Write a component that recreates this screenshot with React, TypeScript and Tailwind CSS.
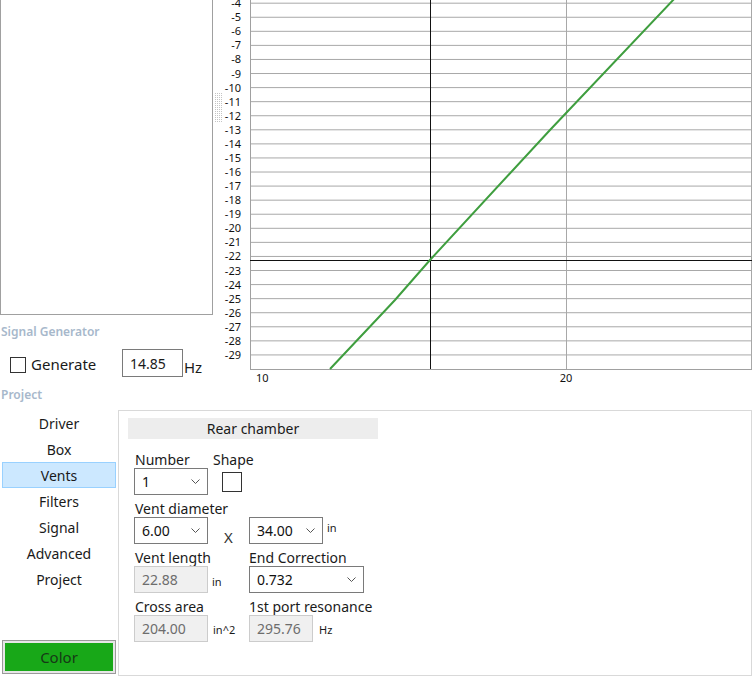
import React from "react";

const ROW = 14.07;
const PLOT_LEFT = 37;
const PLOT_BOTTOM = 369;
const CHART_W = 539;

const yFor = (v: number) => PLOT_BOTTOM - (v + 30) * ROW;
const levels = Array.from({ length: 27 }, (_, i) => -3 - i);

function Chart() {
    return (
        <svg width={CHART_W} height={384} className="block font-['Noto_Sans',sans-serif] text-[11px]">
            {/* splitter grip */}
            {Array.from({ length: 15 }, (_, r) =>
                [2, 4, 6, 8].map((c) => (
                    <rect key={`${r}-${c}`} x={c} y={93 + r * 2} width={1} height={1} fill="#c4c4c4" />
                ))
            )}

            {levels.map((v) => (
                <line key={v} x1={PLOT_LEFT} x2={CHART_W} y1={yFor(v)} y2={yFor(v)} stroke="#a8a8a8" strokeWidth={1} />
            ))}
            {levels.slice(1).map((v) => (
                <text key={v} x={28} y={yFor(v) + 4} textAnchor="end" fill="#111">
                    {v}
                </text>
            ))}

            <line x1={PLOT_LEFT + 0.5} x2={PLOT_LEFT + 0.5} y1={0} y2={PLOT_BOTTOM} stroke="#a0a0a0" />
            <line x1={353.5} x2={353.5} y1={0} y2={PLOT_BOTTOM} stroke="#a8a8a8" />
            <line x1={538.5} x2={538.5} y1={0} y2={PLOT_BOTTOM} stroke="#a8a8a8" />
            <line x1={PLOT_LEFT} x2={CHART_W} y1={PLOT_BOTTOM + 0.5} y2={PLOT_BOTTOM + 0.5} stroke="#a0a0a0" />

            {/* cursor */}
            <line x1={217.5} x2={217.5} y1={0} y2={PLOT_BOTTOM} stroke="#111" />
            <line x1={PLOT_LEFT} x2={CHART_W} y1={260.5} y2={260.5} stroke="#111" />

            <polyline
                points="117,369 182,300 217,260 337,130 463,-3"
                fill="none"
                stroke="#3f9e3f"
                strokeWidth={2}
            />

            <text x={43} y={382} fill="#111">10</text>
            <text x={353} y={382} textAnchor="middle" fill="#111">20</text>
        </svg>
    );
}

function Chevron() {
    return (
        <svg width="9" height="5" viewBox="0 0 9 5">
            <path d="M0.5 0.5 L4.5 4.5 L8.5 0.5" fill="none" stroke="#555" strokeWidth="1" />
        </svg>
    );
}

function Select({ value, w }: { value: string; w: string }) {
    return (
        <div className={`${w} h-[27px] flex items-center justify-between border border-[#7a7a7a] bg-white pl-[7px] pr-[7px] text-[#111]`}>
            <span>{value}</span>
            <Chevron />
        </div>
    );
}

function ReadOnly({ value, w }: { value: string; w: string }) {
    return (
        <div className={`${w} h-[27px] flex items-center border border-[#cccccc] bg-[#f0f0f0] pl-[7px] text-[#6d6d6d]`}>
            {value}
        </div>
    );
}

const navItems = ["Driver", "Box", "Vents", "Filters", "Signal", "Advanced", "Project"];

export default function App() {
    return (
        <div className="w-[752px] h-[683px] bg-white overflow-hidden flex flex-col font-['Noto_Sans',sans-serif] text-[14px] text-[#1a1a1a]">
            <div className="h-[410px] flex">
                <div className="w-[213px] flex flex-col">
                    <div className="h-[315px] border-l border-r border-b border-[#a0a0a0] bg-white" />
                    <div className="mt-[9px] h-[16px] pl-[1px] text-[12px] leading-[16px] font-semibold text-[#a7b8cb]">
                        Signal Generator
                    </div>
                    <div className="mt-[9px] h-[28px] flex items-center">
                        <div className="ml-[10px] mt-[3px] w-[16px] h-[16px] border border-[#333] bg-white" />
                        <span className="ml-[5px] mt-[3px] w-[91px] text-[15px]">Generate</span>
                        <div className="w-[61px] h-[28px] border border-[#7a7a7a] flex items-center pl-[7px]">14.85</div>
                        <span className="ml-[1px] mt-[9px] text-[15px]">Hz</span>
                    </div>
                    <div className="mt-[10px] h-[16px] pl-[1px] text-[12px] leading-[16px] font-semibold text-[#a7b8cb]">
                        Project
                    </div>
                </div>
                <Chart />
            </div>

            <div className="flex-1 flex">
                <div className="w-[118px] flex flex-col">
                    {navItems.map((item) => (
                        <div
                            key={item}
                            className={`mx-[2px] h-[26px] flex items-center justify-center ${
                                item === "Vents" ? "bg-[#cce8ff] border border-[#99d1ff]" : ""
                            }`}
                        >
                            {item}
                        </div>
                    ))}
                    <div className="flex-1" />
                    <div className="mx-[2px] mb-[9px] h-[34px] border border-[#9a9a9a] p-[2px] bg-[#e6e6e6]">
                        <div className="h-full bg-[#18a818] flex items-center justify-center text-[#163816] text-[15px]">
                            Color
                        </div>
                    </div>
                </div>

                <div className="flex-1 mb-[7px] border border-[#d9d9d9] pl-[9px] pt-[7px]">
                    <div className="w-[250px] h-[21px] bg-[#ededed] flex items-center justify-center">Rear chamber</div>

                    <div className="pl-[6px] mt-[12px] flex flex-col">
                        {/* number / shape */}
                        <div className="flex h-[17px] items-center">
                            <span className="w-[79px] pl-[1px]">Number</span>
                            <span>Shape</span>
                        </div>
                        <div className="flex items-center h-[27px]">
                            <Select value="1" w="w-[74px]" />
                            <div className="ml-[14px] w-[20px] h-[20px] border border-[#333]" />
                        </div>

                        {/* diameter */}
                        <div className="mt-[5px] h-[17px] flex items-center pl-[1px]">Vent diameter</div>
                        <div className="flex h-[27px]">
                            <Select value="6.00" w="w-[74px]" />
                            <span className="w-[41px] text-center text-[15px] mt-[9px] text-[#333]">X</span>
                            <Select value="34.00" w="w-[74px]" />
                            <span className="ml-[4px] text-[11px] mt-[3px]">in</span>
                        </div>

                        {/* length / correction */}
                        <div className="mt-[5px] h-[17px] flex items-center">
                            <span className="w-[115px] pl-[1px]">Vent length</span>
                            <span>End Correction</span>
                        </div>
                        <div className="flex h-[27px] items-center">
                            <ReadOnly value="22.88" w="w-[74px]" />
                            <span className="w-[41px] pl-[4px] text-[11px] mt-[6px]">in</span>
                            <Select value="0.732" w="w-[115px]" />
                        </div>

                        {/* cross area / resonance */}
                        <div className="mt-[5px] h-[17px] flex items-center">
                            <span className="w-[115px] pl-[1px]">Cross area</span>
                            <span>1st port resonance</span>
                        </div>
                        <div className="flex h-[27px] items-center">
                            <ReadOnly value="204.00" w="w-[74px]" />
                            <span className="w-[41px] pl-[5px] text-[11px] mt-[4px]">in^2</span>
                            <ReadOnly value="295.76" w="w-[64px]" />
                            <span className="ml-[6px] text-[11px] mt-[4px]">Hz</span>
                        </div>
                    </div>
                </div>
            </div>
        </div>
    );
}
